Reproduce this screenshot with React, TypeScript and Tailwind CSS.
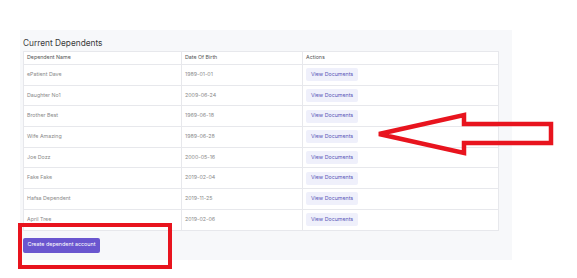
import React from "react";

const rows = [
  ["ePatient Dave", "1989-01-01"],
  ["Daughter No1", "2009-06-24"],
  ["Brother Best", "1969-06-18"],
  ["Wife Amazing", "1989-06-28"],
  ["Joe Dozz", "2000-05-16"],
  ["Fake Fake", "2019-02-04"],
  ["Hafsa Dependent", "2019-11-25"],
  ["April Tree", "2019-02-06"],
];

export default function App() {
  return (
    <div
      className="relative w-[577px] h-[278px] bg-white overflow-hidden"
      style={{ fontFamily: "Inter, 'Noto Sans', sans-serif" }}
    >
      <div className="pt-[30px] pl-[20px]">
        <div className="w-[492px] h-[230px] bg-[#f7f8fa] pl-[3px] pt-[5px]">
          <div className="text-[8.3px] leading-[16px] text-[#3a3a3a] h-[16px]">
            Current Dependents
          </div>
          <table className="border-collapse bg-white text-[5.3px] text-[#8a8a8a] table-fixed w-[475px]">
            <colgroup>
              <col className="w-[158px]" />
              <col className="w-[121px]" />
              <col className="w-[196px]" />
            </colgroup>
            <thead>
              <tr className="h-[13px] text-[#555]">
                <th className="border border-[#e7e8ec] text-left font-normal pl-[3px]">Dependent Name</th>
                <th className="border border-[#e7e8ec] text-left font-normal pl-[3px]">Date Of Birth</th>
                <th className="border border-[#e7e8ec] text-left font-normal pl-[3px]">Actions</th>
              </tr>
            </thead>
            <tbody>
              {rows.map(([n, d]) => (
                <tr key={n} className="h-[20.7px]">
                  <td className="border border-[#e7e8ec] pl-[3px]">{n}</td>
                  <td className="border border-[#e7e8ec] pl-[3px]">{d}</td>
                  <td className="border border-[#e7e8ec] pl-[3px]">
                    <span className="inline-flex items-center justify-center w-[52px] h-[13px] rounded-[2px] bg-[#eff0fb] text-[#5b57b8] text-[5.3px]">
                      View Documents
                    </span>
                  </td>
                </tr>
              ))}
            </tbody>
          </table>
          <div className="flex pt-[7px]">
            <div className="flex items-center justify-center w-[77px] h-[15px] rounded-[2px] bg-[#6a56cf] text-white text-[5.4px] leading-none">
              Create dependent account
            </div>
          </div>
        </div>
      </div>
      <svg className="absolute left-0 top-0" width="577" height="278" viewBox="0 0 577 278">
        <rect x="20" y="225" width="150" height="42" fill="none" stroke="#e8141e" strokeWidth="4" />
        <polygon
          points="379,134 464,115 464,124 551,124 551,143 464,143 464,153"
          fill="none"
          stroke="#e8141e"
          strokeWidth="4.5"
          strokeLinejoin="miter"
        />
      </svg>
    </div>
  );
}
